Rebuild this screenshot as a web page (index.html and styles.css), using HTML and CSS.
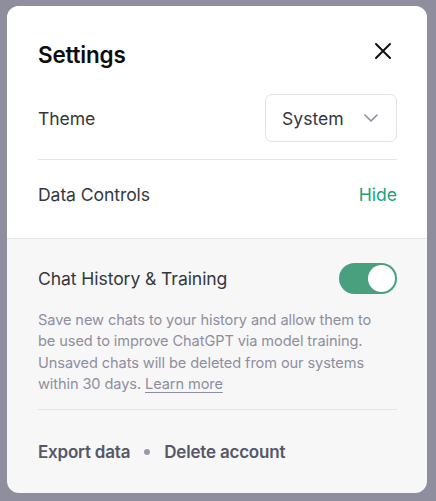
FILE: index.html
```html
<!DOCTYPE html>
<html>
<head>
<meta charset="utf-8">
<link rel="stylesheet" href="styles.css">
</head>
<body>
<div class="card">
  <div class="top">
    <div class="header">
      <h1 class="title">Settings</h1>
      <button class="close" aria-label="Close">
        <svg width="18" height="18" viewBox="0 0 18 18"><path d="M2 2 L16 16 M16 2 L2 16" stroke="#111" stroke-width="2" stroke-linecap="round" fill="none"/></svg>
      </button>
    </div>
    <div class="row theme-row">
      <span class="label">Theme</span>
      <div class="select">
        <span>System</span>
        <svg width="16" height="10" viewBox="0 0 16 10"><path d="M2 2 L8 8 L14 2" stroke="#8e8ea0" stroke-width="1.6" fill="none" stroke-linecap="round" stroke-linejoin="round"/></svg>
      </div>
    </div>
    <div class="divider d1"></div>
    <div class="row data-row">
      <span class="label">Data Controls</span>
      <span class="hide">Hide</span>
    </div>
  </div>
  <div class="bottom">
    <div class="row toggle-row">
      <span class="label">Chat History &amp; Training</span>
      <div class="toggle"><div class="knob"></div></div>
    </div>
    <p class="desc">Save new chats to your history and allow them to be used to improve ChatGPT via model training. Unsaved chats will be deleted from our systems within 30 days. <a class="learn">Learn more</a></p>
    <div class="divider d2"></div>
    <div class="actions">
      <span>Export data</span>
      <span class="dot"></span>
      <span>Delete account</span>
    </div>
  </div>
</div>
</body>
</html>
```

FILE: styles.css
```css
html, body {
  margin: 0;
  padding: 0;
}
body {
  width: 436px;
  height: 501px;
  background: #8f8e9e;
  font-family: Inter, "Noto Sans", sans-serif;
  padding: 6px 9px 8px 7px;
  box-sizing: border-box;
  overflow: hidden;
}
.card {
  width: 420px;
  height: 487px;
  background: #f7f7f8;
  border-radius: 12px;
  overflow: hidden;
  display: flex;
  flex-direction: column;
}
.top {
  background: #ffffff;
  padding: 32px 30px 0 31px;
  height: 200px;
  border-bottom: 1px solid #e5e5e5;
}
.header {
  display: flex;
  align-items: center;
  justify-content: space-between;
  height: 32px;
}
.title {
  margin: 0;
  font-size: 22.5px;
  font-weight: 600;
  color: #0d0d0d;
  letter-spacing: -0.2px;
}
.close {
  border: none;
  background: none;
  padding: 0;
  width: 18px;
  height: 18px;
  margin-right: 5px;
  margin-top: -6px;
  display: flex;
}
.row {
  display: flex;
  align-items: center;
  justify-content: space-between;
}
.label {
  font-size: 17.6px;
  color: #353740;
  letter-spacing: -0.1px;
}
.theme-row {
  margin-top: 24px;
  height: 48px;
}
.select {
  box-sizing: border-box;
  width: 132px;
  height: 48px;
  border: 1px solid #e3e3e6;
  border-radius: 7px;
  display: flex;
  align-items: center;
  justify-content: space-between;
  padding: 0 17px 0 16px;
  font-size: 17.6px;
  color: #353740;
}
.divider {
  height: 1px;
  background: #e5e5e5;
}
.d1 {
  margin-top: 17px;
}
.data-row {
  margin-top: 20px;
  height: 28px;
}
.hide {
  font-size: 17.6px;
  color: #19a37e;
}
.bottom {
  padding: 24px 30px 0 31px;
}
.toggle-row {
  height: 31px;
}
.toggle {
  width: 58px;
  height: 31px;
  border-radius: 16px;
  background: #49a07f;
  display: flex;
  align-items: center;
  justify-content: flex-end;
  padding: 0 2px;
  box-sizing: border-box;
}
.knob {
  width: 27px;
  height: 27px;
  border-radius: 50%;
  background: #ffffff;
}
.desc {
  margin: 16px 0 0;
  max-width: 346px;
  font-size: 14.6px;
  line-height: 21.3px;
  color: #8e8ea0;
  letter-spacing: -0.1px;
}
.learn {
  color: #8e8ea0;
  text-decoration: underline;
  text-underline-offset: 3px;
}
.d2 {
  margin-top: 14px;
}
.actions {
  margin-top: 30px;
  height: 24px;
  display: flex;
  align-items: center;
  gap: 12px;
  font-size: 17px;
  font-weight: 600;
  color: #565869;
  letter-spacing: -0.2px;
}
.dot {
  width: 6px;
  height: 6px;
  border-radius: 50%;
  background: #9a9aa8;
  margin: 0 2px;
}
```
